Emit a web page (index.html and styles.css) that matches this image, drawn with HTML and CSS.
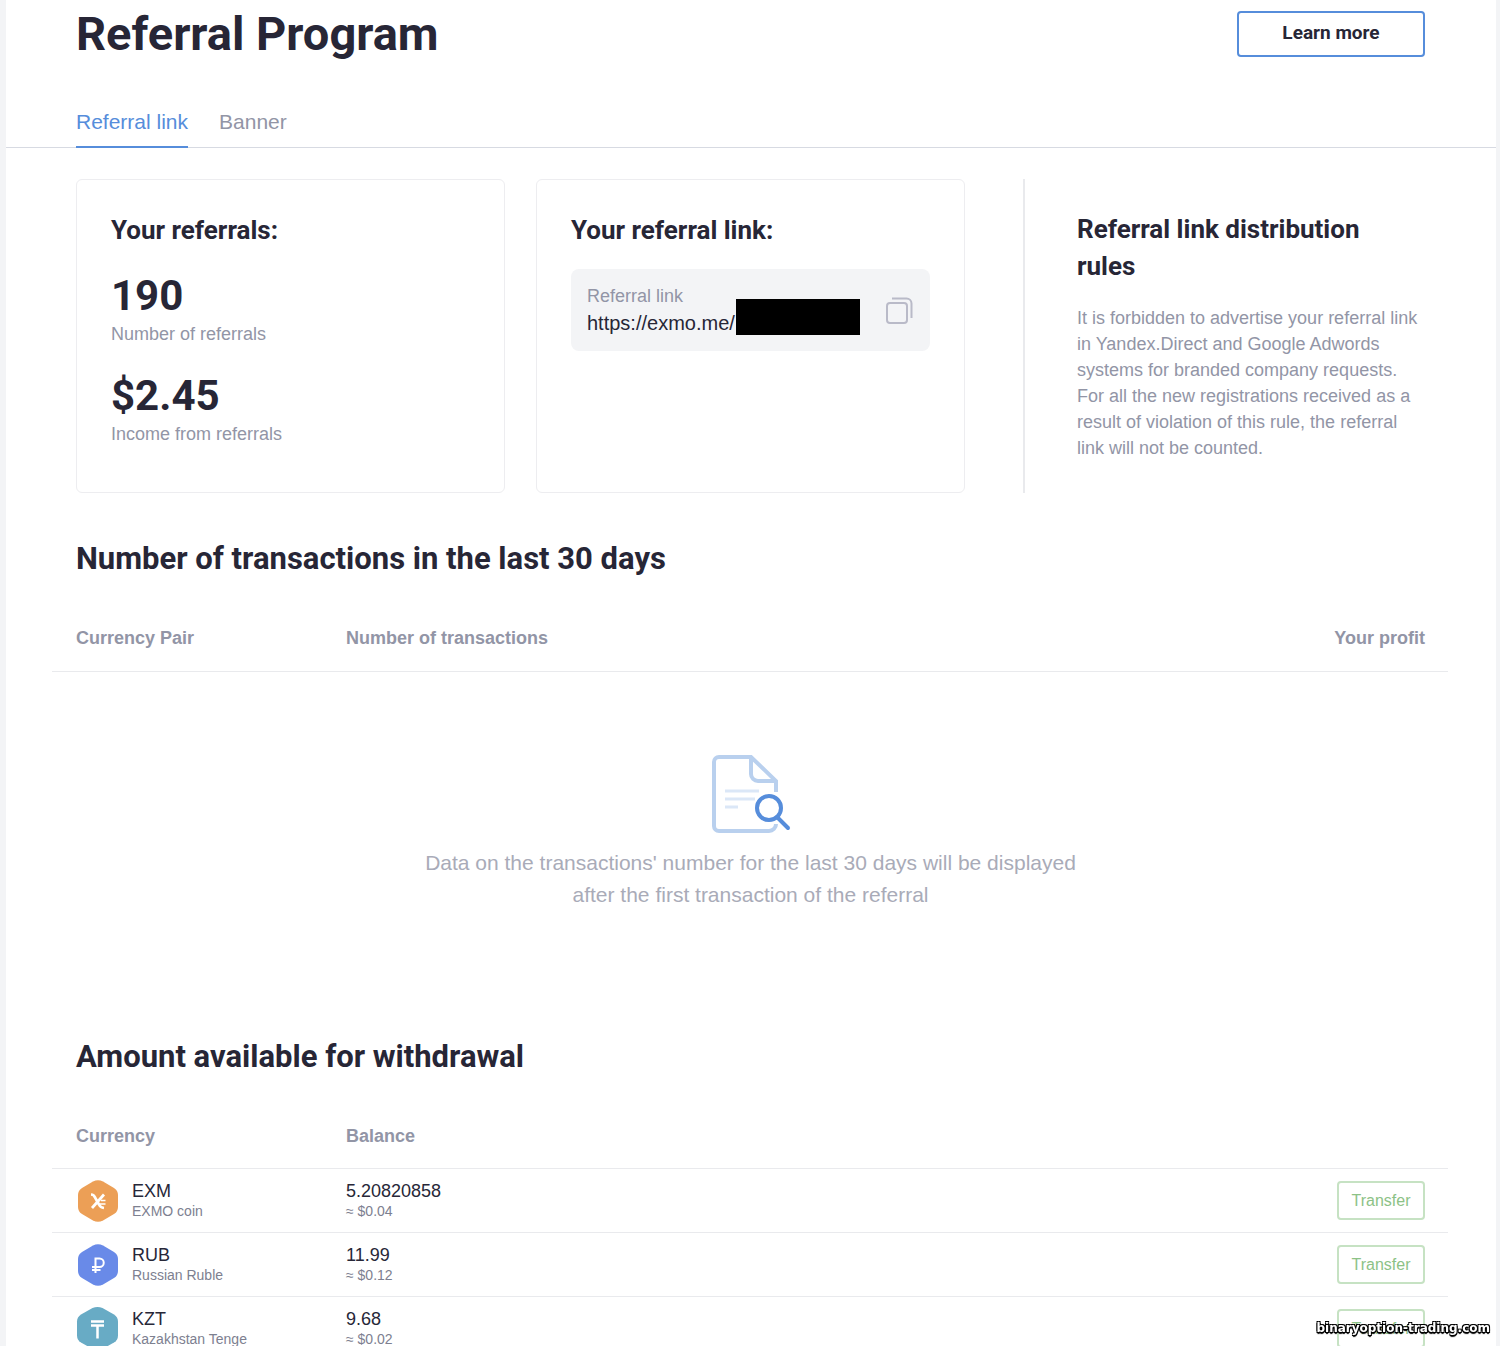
FILE: index.html
```html
<!DOCTYPE html>
<html lang="en">
<head>
    <meta charset="UTF-8">
    <meta name="viewport" content="width=device-width, initial-scale=1.0">
    <title>Referral Program</title>
    <link rel="stylesheet" href="styles.css">
</head>
<body>
    <div class="page">
        <header class="page-header">
            <h1>Referral Program</h1>
            <button type="button" class="btn-learn">Learn more</button>
        </header>
        <nav class="tabs">
            <a href="#link" class="tab active">Referral link</a>
            <a href="#banner" class="tab">Banner</a>
        </nav>
        <main>
            <div class="cards">
                <section class="card">
                    <h3>Your referrals:</h3>
                    <div class="stat">190</div>
                    <div class="stat-label">Number of referrals</div>
                    <div class="stat">$2.45</div>
                    <div class="stat-label">Income from referrals</div>
                </section>
                <section class="card">
                    <h3>Your referral link:</h3>
                    <div class="link-box">
                        <div class="link-field">
                            <label for="refLink">Referral link</label>
                            <input type="text" id="refLink" value="https://exmo.me/" readonly>
                            <span class="redacted"></span>
                        </div>
                        <button type="button" class="btn-copy" aria-label="Copy">
                            <svg width="28" height="28" viewBox="0 0 28 28" fill="none" stroke="#b9bac8" stroke-width="2">
                                <rect x="1" y="7" width="20" height="20" rx="3"/>
                                <path d="M6 2.500h14.500a5 5 0 0 1 5 5V22"/>
                            </svg>
                        </button>
                    </div>
                </section>
                <section class="rules">
                    <h3>Referral link distribution rules</h3>
                    <p>It is forbidden to advertise your referral link in Yandex.Direct and Google Adwords systems for branded company requests. For all the new registrations received as a result of violation of this rule, the referral link will not be counted.</p>
                </section>
            </div>

            <h2>Number of transactions in the last 30 days</h2>
            <table>
                <thead>
                    <tr>
                        <th class="col-name">Currency Pair</th>
                        <th>Number of transactions</th>
                        <th class="col-right">Your profit</th>
                    </tr>
                </thead>
            </table>
            <div class="empty">
                <svg width="80" height="80" viewBox="0 0 80 80" fill="none">
                    <path d="M65 38V27L40 3H8a5 5 0 0 0-5 5v64a5 5 0 0 0 5 5h50a7 7 0 0 0 7-7" stroke="#b9d0ee" stroke-width="4"/>
                    <path d="M40 3v17a7 7 0 0 0 7 7h18" stroke="#b9d0ee" stroke-width="4"/>
                    <path d="M14 37h34M14 45h30M14 53h13" stroke="#dbe7f7" stroke-width="3"/>
                    <circle cx="58" cy="54" r="16" fill="#fff"/>
                    <circle cx="58" cy="54" r="12" stroke="#568ddb" stroke-width="4"/>
                    <path d="M66 63l11 11" stroke="#568ddb" stroke-width="4" stroke-linecap="round"/>
                </svg>
                <p>Data on the transactions' number for the last 30 days will be displayed<br>after the first transaction of the referral</p>
            </div>

            <h2>Amount available for withdrawal</h2>
            <table>
                <thead>
                    <tr>
                        <th class="col-name">Currency</th>
                        <th>Balance</th>
                        <th class="col-right"></th>
                    </tr>
                </thead>
                <tbody>
                    <tr>
                        <td>
                            <div class="coin">
                                <svg width="42" height="44" viewBox="0 0 42 44">
                                    <path d="M17 2.500Q22 0 27 2.500L38 9q4 2.500 4 7v12q0 4.500-4 7l-11 6.500q-5 2.500-10 0L6 35q-4-2.500-4-7V16q0-4.500 4-7z" fill="#ec9f56"/>
                                    <path d="M15 15.500q3 0 4 3l4 7q1.500 3 5 3.500M28 15.500L16 29" fill="none" stroke="#fff" stroke-width="2.700"/>
                                    <path d="M25 21.500h4.500M24 25h5.500" stroke="#fff" stroke-width="1.500"/>
                                </svg>
                                <div class="cell">
                                    <div class="main">EXM</div>
                                    <div class="sub">EXMO coin</div>
                                </div>
                            </div>
                        </td>
                        <td><div class="cell"><div class="main">5.20820858</div><div class="sub">≈ $0.04</div></div></td>
                        <td class="col-right"><button type="button" class="btn-transfer">Transfer</button></td>
                    </tr>
                    <tr>
                        <td>
                            <div class="coin">
                                <svg width="42" height="44" viewBox="0 0 42 44">
                                    <path d="M17 2.500Q22 0 27 2.500L38 9q4 2.500 4 7v12q0 4.500-4 7l-11 6.500q-5 2.500-10 0L6 35q-4-2.500-4-7V16q0-4.500 4-7z" fill="#698ae8"/>
                                    <path d="M19.500 30V15.500h4a4 4 0 0 1 0 8.500h-7.500M16 27h8.500" fill="none" stroke="#fff" stroke-width="2"/>
                                </svg>
                                <div class="cell">
                                    <div class="main">RUB</div>
                                    <div class="sub">Russian Ruble</div>
                                </div>
                            </div>
                        </td>
                        <td><div class="cell"><div class="main">11.99</div><div class="sub">≈ $0.12</div></div></td>
                        <td class="col-right"><button type="button" class="btn-transfer">Transfer</button></td>
                    </tr>
                    <tr>
                        <td>
                            <div class="coin">
                                <svg width="42" height="44" viewBox="0 0 42 44">
                                    <path d="M16.500 1Q21.500-1 26.500 1L38 7.500q4 2.500 4 7v14q0 4.500-4 7l-11.500 6.500q-5 2.500-10 0L5 35.500q-4-2.500-4-7v-14q0-4.500 4-7z" fill="#68abc5"/>
                                    <path d="M15 14.500h13M15 18.500h13M21.500 18.500v13" fill="none" stroke="#fff" stroke-width="2.500"/>
                                </svg>
                                <div class="cell">
                                    <div class="main">KZT</div>
                                    <div class="sub">Kazakhstan Tenge</div>
                                </div>
                            </div>
                        </td>
                        <td><div class="cell"><div class="main">9.68</div><div class="sub">≈ $0.02</div></div></td>
                        <td class="col-right"><button type="button" class="btn-transfer">Transfer</button></td>
                    </tr>
                </tbody>
            </table>
        </main>
    </div>
    <div class="watermark">binaryoption-trading.com</div>
</body>
</html>
```
FILE: styles.css
```css
* {
    box-sizing: border-box;
}
body {
    margin: 0;
    padding: 0 4px 0 6px;
    background: #f3f4f6;
    font-family: "Liberation Sans", Arial, sans-serif;
    font-size: 18px;
    color: #272738;
    height: 100vh;
    overflow: hidden;
}
.page {
    background: #fff;
    min-height: 100vh;
}
h1, h2, h3, p {
    margin: 0;
}
h1, h2, h3, .stat {
    font-family: Roboto, sans-serif;
    font-weight: 700;
    color: #272636;
}
button {
    font-family: inherit;
    background: #fff;
    cursor: pointer;
}
.page-header {
    display: flex;
    justify-content: space-between;
    align-items: center;
    height: 68px;
    padding: 0 71px 0 70px;
}
h1 {
    font-size: 47px;
    line-height: 56px;
}
.btn-learn {
    width: 188px;
    height: 46px;
    padding-bottom: 4px;
    border: 2px solid #568ddb;
    border-radius: 4px;
    font-family: Roboto, sans-serif;
    font-size: 19px;
    font-weight: 700;
    color: #272636;
}
.tabs {
    display: flex;
    gap: 31px;
    height: 80px;
    padding: 0 70px;
    align-items: flex-end;
    border-bottom: 1px solid #d7dae2;
}
.tab {
    height: 42px;
    margin-bottom: -1px;
    line-height: 31px;
    font-size: 21px;
    color: #9295a6;
    text-decoration: none;
}
.tab.active {
    color: #568ddb;
    border-bottom: 2px solid #568ddb;
}
main {
    padding: 31px 71px 0 70px;
}
.cards {
    display: grid;
    grid-template-columns: repeat(3, 1fr);
    gap: 31px;
    min-height: 314px;
}
.card {
    border: 1px solid #ededf0;
    border-radius: 6px;
    padding: 32px 34px;
}
h3 {
    font-size: 26px;
    line-height: 37px;
}
.stat {
    margin-top: 20px;
    font-size: 42px;
    line-height: 54px;
}
.stat-label {
    padding-bottom: 4px;
    line-height: 22px;
    color: #9295a6;
}
.link-box {
    display: flex;
    justify-content: space-between;
    align-items: center;
    height: 82px;
    margin-top: 20px;
    padding: 0 16px;
    border-radius: 8px;
    background: #f3f4f6;
}
.link-field {
    position: relative;
    flex: 1;
}
.link-field label {
    display: block;
    line-height: 26px;
    color: #9295a6;
}
.link-field input {
    display: block;
    width: 100%;
    height: 28px;
    padding: 0;
    border: 0;
    background: none;
    font-family: inherit;
    font-size: 20px;
    color: #272636;
}
.redacted {
    position: absolute;
    left: 149px;
    top: 16px;
    width: 124px;
    height: 36px;
    background: #000;
}
.btn-copy {
    border: 0;
    padding: 0;
    background: none;
}
.btn-copy svg {
    display: block;
}
.rules {
    margin-left: 27px;
    padding: 32px 0 0 52px;
    border-left: 2px solid #e9eaed;
}
.rules h3 {
    max-width: 320px;
}
.rules p {
    margin-top: 20px;
    line-height: 26px;
    color: #9295a6;
}
h2 {
    margin-top: 44px;
    font-size: 31px;
    line-height: 43px;
}
table {
    width: calc(100% + 47px);
    margin: 27px -23px 0 -24px;
    border-collapse: collapse;
    table-layout: fixed;
}
th {
    height: 64px;
    padding: 0 24px;
    border-bottom: 1px solid #e9eaed;
    text-align: left;
    color: #9295a6;
}
td {
    height: 64px;
    padding: 0 24px;
    border-bottom: 1px solid #e9eaed;
}
.col-name {
    width: 270px;
}
.col-right {
    padding-right: 23px;
    text-align: right;
}
.empty {
    height: 319px;
    padding-top: 82px;
    text-align: center;
    font-size: 21px;
    line-height: 32px;
    color: #a9abb8;
}
.empty svg {
    display: block;
    margin: 0 auto 13px;
}
.coin {
    display: flex;
    align-items: center;
    gap: 14px;
}
.main {
    line-height: 20px;
}
.sub {
    font-size: 14px;
    line-height: 20px;
    color: #7d8090;
}
.btn-transfer {
    width: 88px;
    height: 39px;
    border: 2px solid #c6e2c3;
    border-radius: 4px;
    font-size: 16px;
    color: #8cc286;
}
.watermark {
    position: fixed;
    right: 10px;
    bottom: 8px;
    font-family: "DejaVu Sans", sans-serif;
    font-size: 12px;
    font-weight: bold;
    line-height: 20px;
    color: #fff;
    text-shadow: -1px -1px 0 #000, 1px -1px 0 #000, -1px 1px 0 #000, 1px 1px 0 #000, 0 2px 1px #000;
}
```
